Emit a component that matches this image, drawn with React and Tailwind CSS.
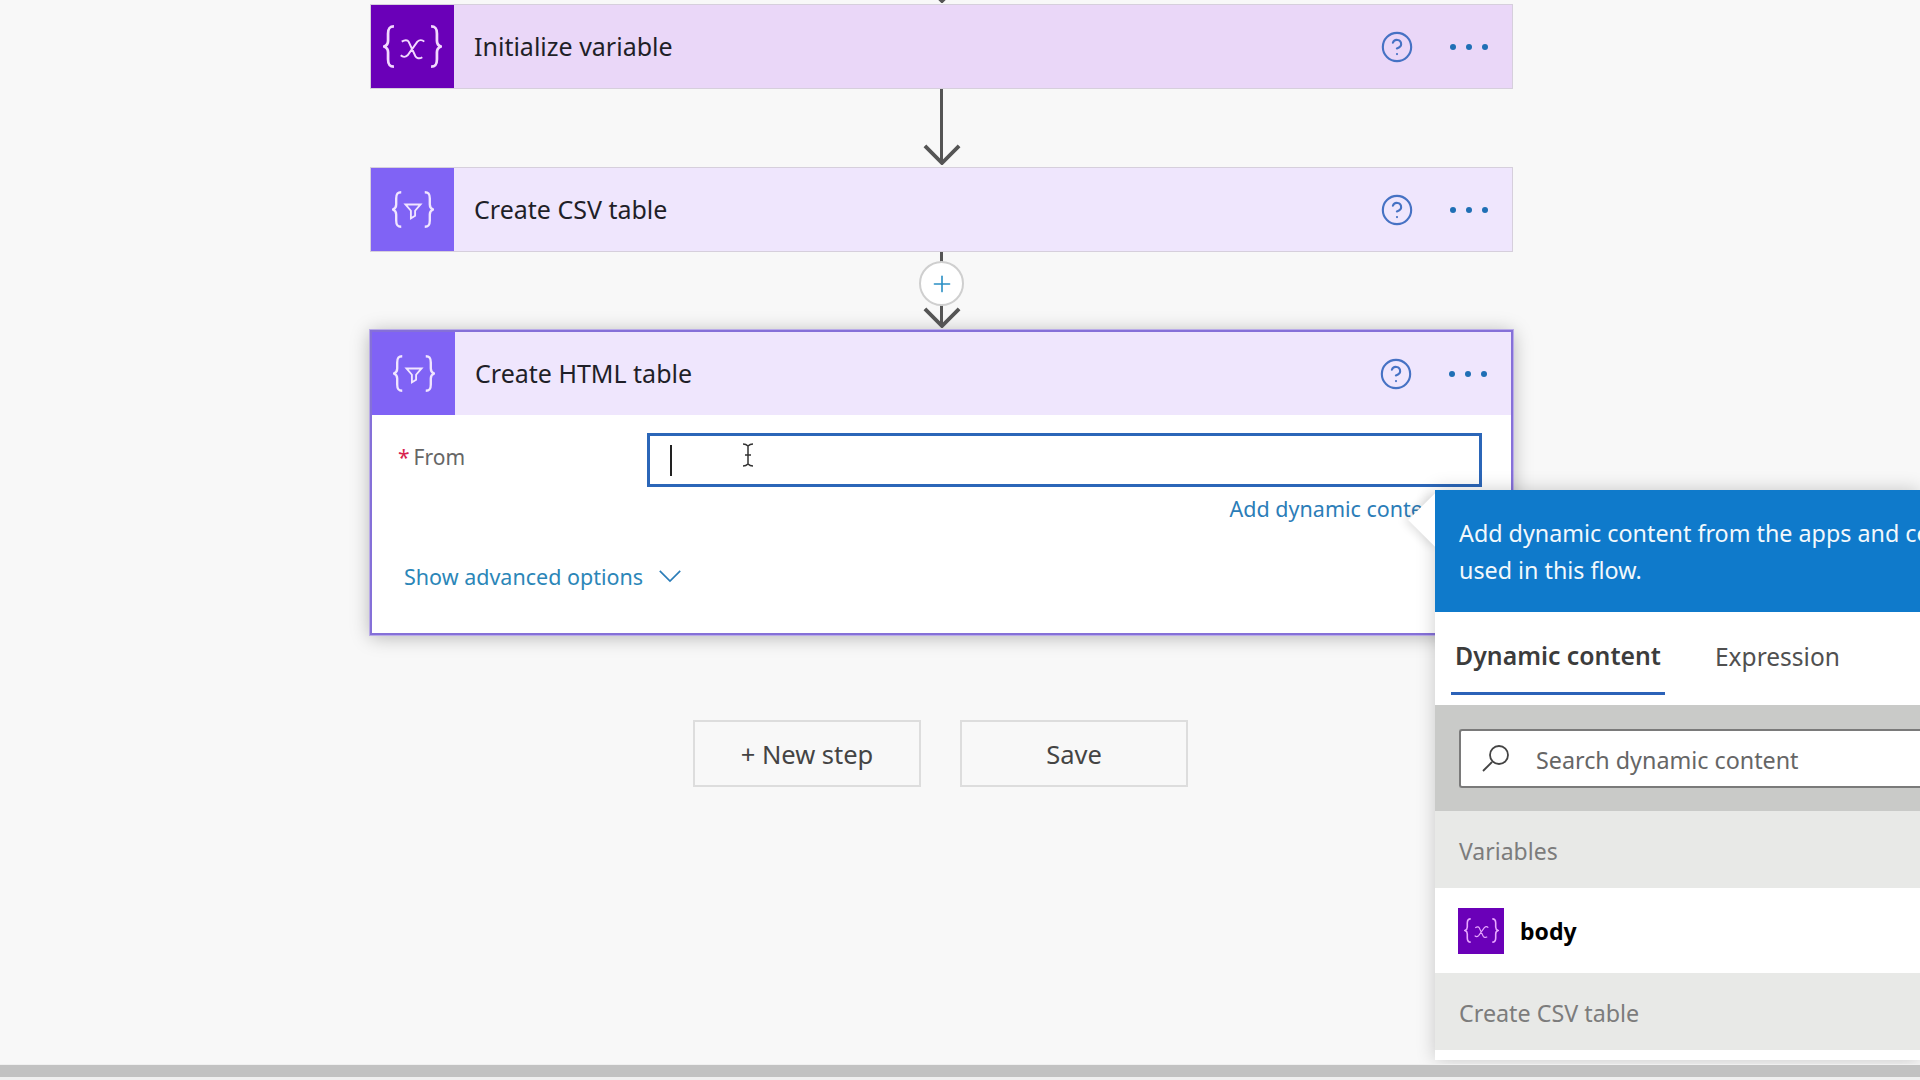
import { CircleHelp, Plus } from "lucide-react";

const font = { fontFamily: '"Noto Sans", "Open Sans", sans-serif' };

const leftBrace = "M11 1.5C6 1.5 5 4 5 9v7c0 3-1.5 5-4 6 2.500 1 4 3 4 6v7c0 5 1 7.500 6 7.500";
const rightBrace = "M1 1.5c5 0 6 2.500 6 7.500v7c0 3 1.500 5 4 6-2.500 1-4 3-4 6v7c0 5-1 7.500-6 7.500";

function VarIcon({ className, stroke = "#f3d9ff" }) {
  return (
    <svg viewBox="0 0 60 44" className={className} fill="none" stroke={stroke} strokeWidth="2.800">
      <path d={leftBrace} />
      <path d={rightBrace} transform="translate(48 0)" />
      <path d="M19 17c3-2 6-2 7 0l7 15c1 2 4 3 7 1M42 17c-2-2-5-2-7 0L25 31c-2 2-5 2-7 0" strokeWidth="2" />
    </svg>
  );
}

function FilterIcon({ className }) {
  return (
    <svg viewBox="0 0 50 44" className={className} fill="none" stroke="#f1e6ff" strokeWidth="2.800">
      <path d={leftBrace} />
      <path d={rightBrace} transform="translate(38 0)" />
      <path d="M16 16h18l-6.500 7.500v6l-5 3v-9z" strokeWidth="2.200" />
    </svg>
  );
}

function Dots() {
  return (
    <div className="ml-[36px] flex gap-[10px]">
      <span className="h-[6px] w-[6px] rounded-full bg-[#1f6fb5]" />
      <span className="h-[6px] w-[6px] rounded-full bg-[#1f6fb5]" />
      <span className="h-[6px] w-[6px] rounded-full bg-[#1f6fb5]" />
    </div>
  );
}

function CardHeader({ title, iconBg, bg, icon }) {
  return (
    <div className={`flex h-[83px] items-center pr-6 ${bg}`}>
      <div className={`flex h-full w-[83px] shrink-0 items-center justify-center ${iconBg}`}>{icon}</div>
      <span className="ml-5 flex-1 pt-px text-[25px] text-[#1f1f28]">{title}</span>
      <CircleHelp size={34} strokeWidth={1.500} color="#4672c4" />
      <Dots />
    </div>
  );
}

function Card({ title, iconBg, bg, border, icon }) {
  return (
    <div className={`border ${border}`}>
      <CardHeader title={title} iconBg={iconBg} bg={bg} icon={icon} />
    </div>
  );
}

function Arrow({ className }) {
  return (
    <svg viewBox="0 0 40 24" className={className} fill="none" stroke="#555555" strokeWidth="4">
      <path d="M2 4l18 18L38 4" />
    </svg>
  );
}

function Connector() {
  return (
    <div className="flex h-[78px] flex-col items-center">
      <div className="h-[74px] w-[3px] bg-[#555555]" />
      <Arrow className="-mt-[21px] h-[23px] w-[38px]" />
    </div>
  );
}

function PlusConnector() {
  return (
    <div className="relative flex h-[78px] flex-col items-center">
      <div className="h-[74px] w-[3px] bg-[#555555]" />
      <Arrow className="-mt-[21px] h-[23px] w-[38px]" />
      <div className="absolute top-[9px] flex h-[45px] w-[45px] items-center justify-center rounded-full border-2 border-[#cfcfcf] bg-white">
        <Plus size={26} strokeWidth={1.500} color="#2a8fc4" />
      </div>
    </div>
  );
}

function HtmlTableCard() {
  return (
    <div className="border-2 border-[#8570d8] bg-white shadow-[0_0_0_1px_#b9abe8,0_2px_18px_rgba(0,0,0,0.28)]">
      <CardHeader
        title="Create HTML table"
        iconBg="bg-[#8063f5]"
        bg="bg-[#efe6fd]"
        icon={<FilterIcon className="h-[37px] w-[42px]" />}
      />
      <div className="h-[218px] pl-[26px] pr-[29px] pt-[18px]">
        <div className="flex">
          <div className="w-[249px] shrink-0 pt-[9px] text-[21px] text-[#666666]">
            <span className="mr-[4px] text-[#d8234e]">*</span>From
          </div>
          <div className="relative flex h-[54px] flex-1 items-center border-[3px] border-[#2b66b8] pl-5">
            <div className="h-[31px] w-[2px] bg-[#222222]" />
            <svg viewBox="0 0 12 24" className="absolute left-[92px] top-[7px] h-[24px] w-[12px]" fill="none" stroke="#333333" strokeWidth="1.500">
              <path d="M1 1c3 0 4 1 5 2 1-1 2-2 5-2M6 3v18M1 23c3 0 4-1 5-2 1 1 2 2 5 2M3 12h6" />
            </svg>
          </div>
        </div>
        <div className="mt-[6px] pr-[38px] text-right text-[21.500px] leading-[32px] text-[#2b7db8]">Add dynamic content</div>
        <div className="mt-[36px] flex items-center pl-[6px] text-[21.500px] text-[#2b86b8]">
          Show advanced options
          <svg viewBox="0 0 24 14" className="ml-[15px] h-[13px] w-[24px] -translate-y-[1px]" fill="none" stroke="#2b7db8" strokeWidth="1.800">
            <path d="M1 1l11 11L23 1" />
          </svg>
        </div>
      </div>
    </div>
  );
}

function DynamicPanel() {
  return (
    <div className="absolute left-[1435px] top-[490px] h-[570px] w-[485px] whitespace-nowrap bg-white shadow-[0_0_18px_rgba(0,0,0,0.2)]">
      <div className="absolute -left-[19px] top-[11px] h-[38px] w-[38px] rotate-45 bg-white shadow-[-3px_3px_10px_rgba(0,0,0,0.12)]" />
      <div className="relative h-[122px] bg-[#0f7acb] pl-6 pt-[25px] text-[23.300px] leading-[37px] text-[#f2f8fc]">
        Add dynamic content from the apps and connectors
        <br />
        used in this flow.
      </div>
      <div className="relative flex h-[93px] bg-white pl-4">
        <div className="flex h-[83px] w-[214px] items-center justify-center border-b-[3px] border-[#2b62b8] pt-[7px] text-[24.800px] font-semibold text-[#3c3c3c]">
          Dynamic content
        </div>
        <div className="ml-[50px] flex h-[83px] items-center pt-[7px] text-[24.500px] text-[#505050]">Expression</div>
      </div>
      <div className="h-[106px] bg-[#c9cac8] pl-6 pt-6">
        <div className="flex h-[59px] items-center rounded-l-[3px] border-2 border-r-0 border-[#7a7a7a] bg-white pl-5 text-[23.300px] text-[#666666]">
          <svg viewBox="0 0 30 30" className="h-[30px] w-[30px]" fill="none" stroke="#444444" strokeWidth="1.800">
            <circle cx="18" cy="11" r="9" />
            <path d="M11 18L2 27" />
          </svg>
          <span className="ml-[25px] pt-[3px]">Search dynamic content</span>
        </div>
      </div>
      <div className="flex h-[77px] items-center bg-[#e8e9e7] pl-6 pt-[3px] text-[23px] text-[#7c7c7c]">Variables</div>
      <div className="flex h-[85px] items-center bg-white pl-[23px]">
        <div className="flex h-[46px] w-[46px] items-center justify-center bg-[#6a00b8]">
          <VarIcon className="h-[25px] w-[35px]" stroke="#e9a8ff" />
        </div>
        <span className="ml-4 pt-px text-[23px] font-bold text-black">body</span>
      </div>
      <div className="flex h-[77px] items-center bg-[#e8e9e7] pl-6 pt-[3px] text-[23.300px] text-[#7c7c7c]">Create CSV table</div>
    </div>
  );
}

export default function App() {
  return (
    <div className="flex h-screen w-screen flex-col overflow-hidden bg-[#f8f8f8]" style={font}>
      <div className="relative flex-1 overflow-hidden">
        <div className="ml-[370px] w-[1143px]">
          <div className="flex h-1 justify-center overflow-hidden">
            <Arrow className="-mt-[20px] h-[23px] w-[38px] shrink-0" />
          </div>
          <Card
            title="Initialize variable"
            iconBg="bg-[#6a00b8]"
            bg="bg-[#ead7f8]"
            border="border-[#d6cfdc]"
            icon={<VarIcon className="h-[43px] w-[59px]" />}
          />
          <Connector />
          <Card
            title="Create CSV table"
            iconBg="bg-[#8063f5]"
            bg="bg-[#efe6fd]"
            border="border-[#d6cfdc]"
            icon={<FilterIcon className="h-[37px] w-[42px]" />}
          />
          <PlusConnector />
          <HtmlTableCard />
          <div className="ml-[323px] mt-[85px] flex gap-[39px] text-[25.500px] text-[#444444]">
            <div className="flex h-[67px] w-[228px] items-center justify-center border-2 border-[#dddddd] pt-px">+ New step</div>
            <div className="flex h-[67px] w-[228px] items-center justify-center border-2 border-[#dddddd] pt-px">Save</div>
          </div>
        </div>
        <DynamicPanel />
      </div>
      <div className="h-4 shrink-0 border-b-[3px] border-t border-[#f0f0f0] bg-[#c2c2c2]" />
    </div>
  );
}
